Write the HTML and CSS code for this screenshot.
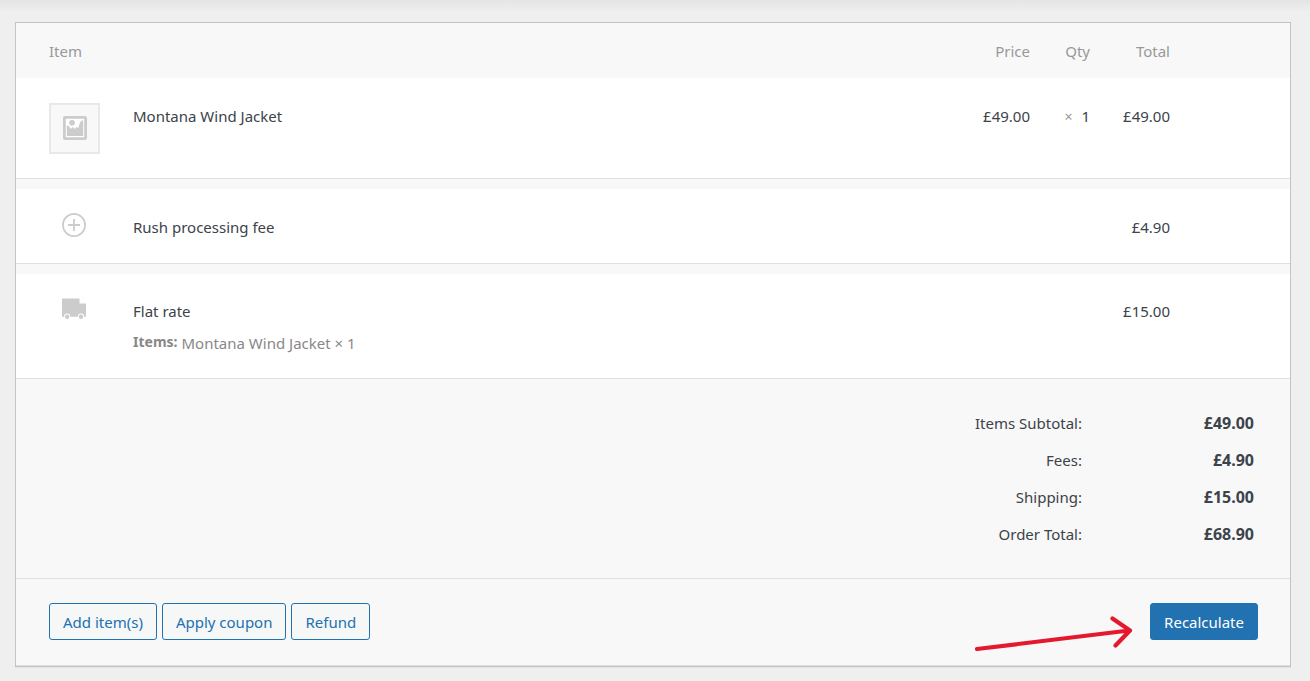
FILE: index.html
```html
<!DOCTYPE html>
<html lang="en">
<head>
<meta charset="utf-8">
<title>Order items</title>
<link rel="stylesheet" href="styles.css">
</head>
<body>
<main class="page">
  <section class="panel">
    <table class="items">
      <thead>
        <tr>
          <th class="thumb" scope="col">Item</th>
          <th class="name"></th>
          <th class="price" scope="col">Price</th>
          <th class="qty" scope="col">Qty</th>
          <th class="total" scope="col">Total</th>
          <th class="edit"></th>
        </tr>
      </thead>
      <tbody class="line-product">
        <tr>
          <td class="thumb">
            <div class="placeholder">
              <svg width="24" height="24" viewBox="0 0 24 24" aria-hidden="true">
                <rect x="1.4" y="1.4" width="21.200" height="21.200" rx="0.5" fill="#fff" stroke="#ccc" stroke-width="2.800"/>
                <path d="M3.800 20V9.500l2 .5 2 3 2-2 2 2 1.500-2 2 1 1.500-5 1.700-2.500h1.700V20z" fill="#ccc"/>
                <circle cx="9" cy="6.800" r="2.800" fill="#ccc"/>
              </svg>
            </div>
          </td>
          <td class="name">Montana Wind Jacket</td>
          <td class="price">£49.00</td>
          <td class="qty"><small class="times">×</small>1</td>
          <td class="total">£49.00</td>
          <td class="edit"></td>
        </tr>
      </tbody>
      <tbody class="line-fee">
        <tr>
          <td class="thumb">
            <svg class="icon" width="24" height="24" viewBox="0 0 24 24" aria-hidden="true">
              <circle cx="12" cy="12" r="11.1" fill="none" stroke="#ccc" stroke-width="1.7"/>
              <path d="M12 6v12M6 12h12" fill="none" stroke="#ccc" stroke-width="1.8"/>
            </svg>
          </td>
          <td class="name">Rush processing fee</td>
          <td class="price"></td>
          <td class="qty"></td>
          <td class="total">£4.90</td>
          <td class="edit"></td>
        </tr>
      </tbody>
      <tbody class="line-shipping">
        <tr>
          <td class="thumb">
            <svg class="icon" width="24" height="24" viewBox="0 0 24 24" aria-hidden="true">
              <path d="M0 .5h17.5v5H24v13.200H0z" fill="#ccc"/>
              <circle cx="5.2" cy="18.6" r="3.1" fill="#fff"/>
              <circle cx="19" cy="18.6" r="3.1" fill="#fff"/>
              <circle cx="5.2" cy="18.7" r="2.2" fill="#ccc"/>
              <circle cx="19" cy="18.7" r="2.2" fill="#ccc"/>
            </svg>
          </td>
          <td class="name">
            Flat rate
            <dl class="meta"><dt>Items:</dt><dd>Montana Wind Jacket × 1</dd></dl>
          </td>
          <td class="price"></td>
          <td class="qty"></td>
          <td class="total">£15.00</td>
          <td class="edit"></td>
        </tr>
      </tbody>
    </table>

    <div class="totals">
      <table class="sums">
        <tbody>
          <tr><th scope="row">Items Subtotal:</th><td>£49.00</td></tr>
          <tr><th scope="row">Fees:</th><td>£4.90</td></tr>
          <tr><th scope="row">Shipping:</th><td>£15.00</td></tr>
          <tr><th scope="row">Order Total:</th><td>£68.90</td></tr>
        </tbody>
      </table>
    </div>

    <div class="actions">
      <button class="button" type="button">Add item(s)</button>
      <button class="button" type="button">Apply coupon</button>
      <button class="button" type="button">Refund</button>
      <div class="recalculate">
        <svg class="arrow" width="160" height="40" viewBox="0 0 160 40" aria-hidden="true">
          <path d="M4 36L156 17.5M139.500 5.5l17.500 12L142.500 32.500" fill="none" stroke="#e5192d" stroke-width="4.200" stroke-linecap="round" stroke-linejoin="round"/>
        </svg>
        <button class="button primary" type="button">Recalculate</button>
      </div>
    </div>
  </section>
</main>
</body>
</html>
```
FILE: styles.css
```css
* {
  box-sizing: border-box;
}

body {
  margin: 0;
  background: #efefef;
  color: #3c434a;
  font: 15px/24px "Segoe UI", "Noto Sans", "Open Sans", sans-serif;
}

.page {
  padding: 22px 19px 14px 15px;
  background: linear-gradient(#e4e4e6, #efefef 12px);
}

.panel {
  border: 1px solid #c3c4c7;
  background: #f8f8f8;
  box-shadow: 0 1px 1px rgba(0, 0, 0, 0.04);
}

.items {
  width: 100%;
  table-layout: fixed;
  border-collapse: separate;
  border-spacing: 0;
}

.items th {
  padding: 16px 0 15px;
  color: #999;
  font-weight: 400;
  text-align: left;
}

.items td {
  padding: 26px 0 24px;
  border-bottom: 1px solid #dfdfdf;
  background: #fff;
  vertical-align: top;
}

.items .thumb {
  width: 117px;
  padding-left: 33px;
}

.items .price,
.items .qty,
.items .total {
  padding-right: 17px;
  text-align: right;
}

.items .price {
  width: 100px;
}

.items .qty {
  width: 60px;
}

.items .total {
  width: 80px;
}

.items .edit {
  width: 103px;
}

.line-product .thumb {
  padding-top: 25px;
}

.placeholder {
  display: grid;
  justify-content: center;
  width: 51px;
  height: 51px;
  padding-top: 11px;
  border: 2px solid #e8e8e8;
  background: #f8f8f8;
}

.times {
  margin-right: 9px;
  color: #999;
  font-size: 14px;
}

.line-fee td,
.line-shipping td {
  border-top: 10px solid #f8f8f8;
}

.icon {
  display: block;
  margin-left: 13px;
}

.line-fee .thumb {
  padding-top: 24px;
}

.line-shipping td {
  padding: 25px 0 23px;
}

.line-shipping .thumb {
  padding-top: 24px;
}

.meta {
  display: flex;
  gap: 4px;
  margin: 8px 0 0;
  color: #888;
}

.meta dt {
  font-size: 14px;
  font-weight: 700;
  line-height: 22px;
}

.meta dd {
  margin: 0;
}

.totals {
  display: flex;
  justify-content: flex-end;
  padding: 26px 36px 25px;
  border-bottom: 1px solid #dfdfdf;
}

.sums {
  border-spacing: 0;
  text-align: right;
}

.sums th,
.sums td {
  padding: 6px 0 7px;
}

.sums th {
  font-weight: 400;
}

.sums td {
  width: 172px;
  font-size: 16px;
  font-weight: 700;
}

.actions {
  display: flex;
  gap: 5px;
  padding: 24px 32px 25px 33px;
  border-bottom: 1px solid #dfdfdf;
}

.button {
  padding: 6px 13px 5px;
  border: 1px solid #2271b1;
  border-radius: 3px;
  background: #f6f7f7;
  color: #2271b1;
  font: inherit;
}

.primary {
  background: #2271b1;
  color: #fff;
}

.recalculate {
  position: relative;
  margin-left: auto;
}

.arrow {
  position: absolute;
  right: calc(100% + 17px);
  bottom: -13px;
}
```
